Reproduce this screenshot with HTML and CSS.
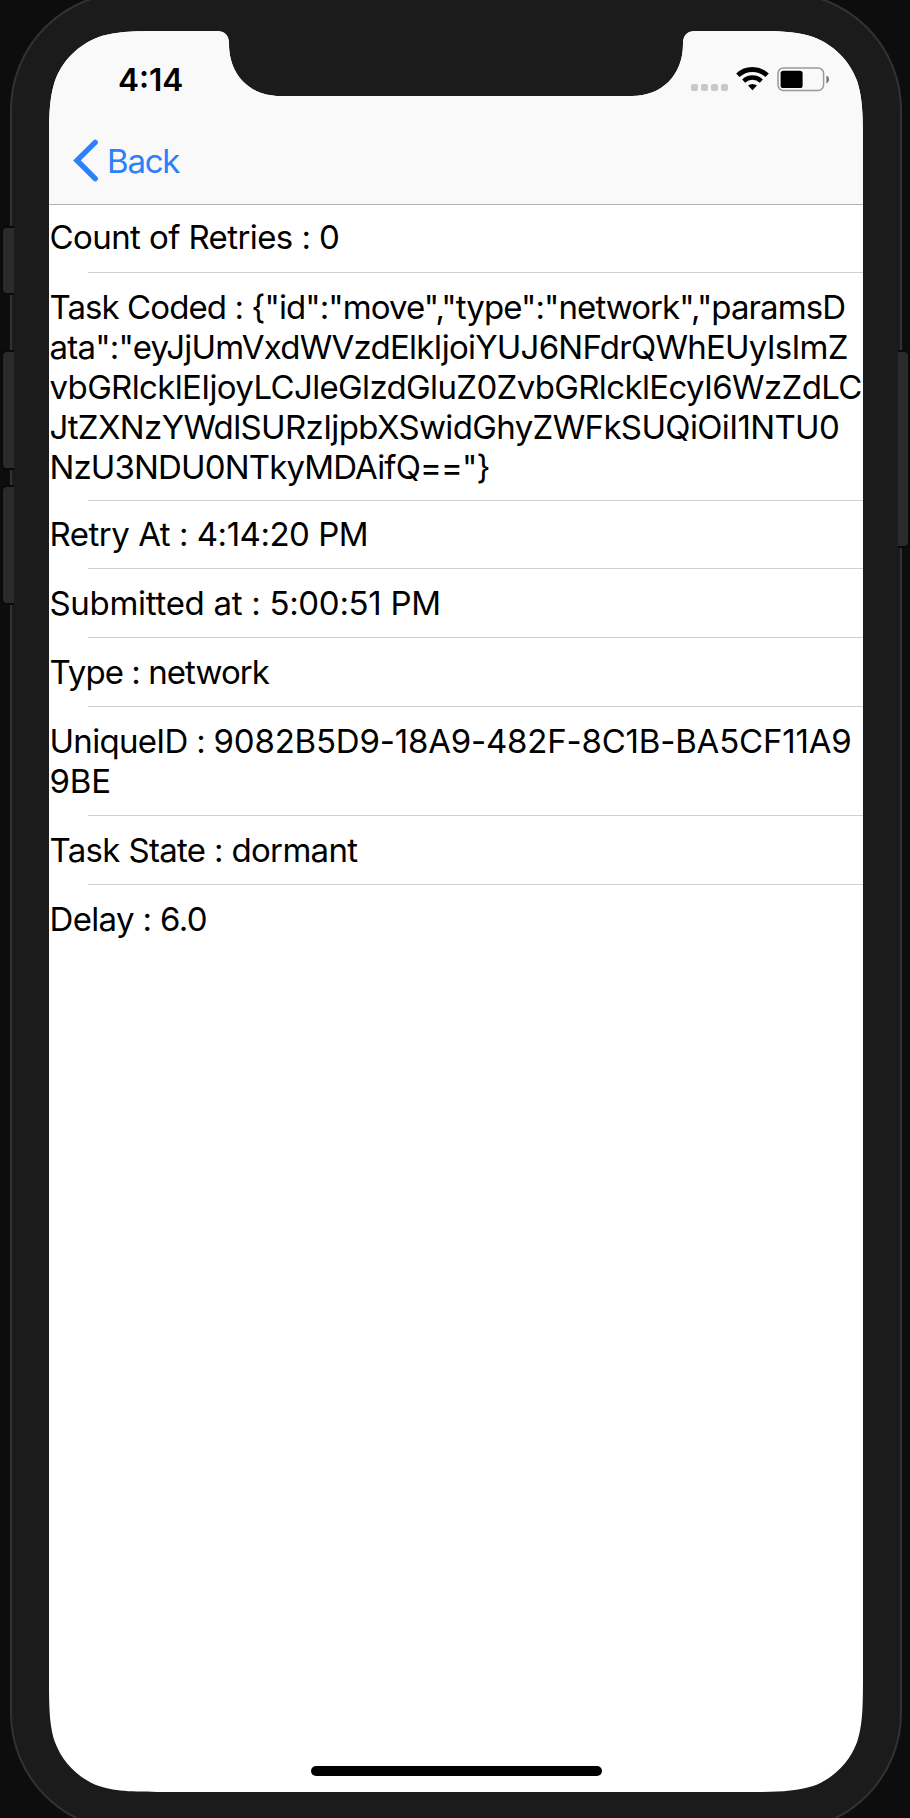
FILE: index.html
```html
<!DOCTYPE html>
<html lang="en">
<head>
<meta charset="utf-8">
<title>Task details</title>
<link rel="stylesheet" href="styles.css">
</head>
<body>
<main class="stage">
  <span class="key key-mute"></span>
  <span class="key key-up"></span>
  <span class="key key-down"></span>
  <span class="key key-power"></span>
  <div class="phone">
    <div class="screen">
      <header class="top">
        <div class="status">
          <span class="time">4:14</span>
          <div class="indicators">
            <span class="signal"><i></i><i></i><i></i><i></i></span>
            <svg class="wifi" width="33" height="24" viewBox="0 0 34 24"><path d="M1.9 8.2a22 22 0 0 1 30.2 0" fill="none" stroke="#000" stroke-width="5"/><path d="M7.9 14.1a13.4 13.4 0 0 1 18.2 0" fill="none" stroke="#000" stroke-width="4.6"/><path d="M12.4 18.8a7 7 0 0 1 9.2 0L17 23.5z"/></svg>
            <svg class="battery" width="53" height="25" viewBox="0 0 53 25"><rect x="1" y="1" width="45.6" height="22.6" rx="5.5" fill="none" stroke="#999" stroke-width="1.5"/><rect x="3.6" y="3.7" width="22" height="17.3" rx="2.6"/><path d="M49.4 8.6c3.6 1.2 3.6 6.6 0 7.8z" fill="#777"/></svg>
          </div>
        </div>
        <nav class="nav">
          <svg class="chevron" width="26" height="43" viewBox="0 0 26 43"><path d="M22.2 3.3L4 21.4l18.2 18.2" fill="none" stroke="#2c80fa" stroke-width="5.4" stroke-linecap="round"/></svg>
          <span class="back">Back</span>
        </nav>
      </header>
      <ul class="rows">
        <li class="row"><span class="line retries">Count of Retries : 0</span></li>
        <li class="row"><span class="line coded-1">Task Coded : {"id":"move","type":"network","paramsD</span><span class="line coded-2">ata":"eyJjUmVxdWVzdElkIjoiYUJ6NFdrQWhEUyIsImZ</span><span class="line coded-3">vbGRlcklEIjoyLCJleGlzdGluZ0ZvbGRlcklEcyI6WzZdLC</span><span class="line coded-4">JtZXNzYWdlSURzIjpbXSwidGhyZWFkSUQiOiI1NTU0</span><span class="line coded-5">NzU3NDU0NTkyMDAifQ=="}</span></li>
        <li class="row raised"><span class="line retry-at">Retry At : 4:14:20 PM</span></li>
        <li class="row raised"><span class="line submitted">Submitted at : 5:00:51 PM</span></li>
        <li class="row"><span class="line type">Type : network</span></li>
        <li class="row"><span class="line uid"><span class="uid-label">UniqueID : </span>9082B5D9-18A9-482F-8C1B-BA5CF11A9</span><span class="line uid">9BE</span></li>
        <li class="row"><span class="line state">Task State : dormant</span></li>
        <li class="row"><span class="line delay">Delay : 6.0</span></li>
      </ul>
      <span class="home"></span>
    </div>
  </div>
</main>
</body>
</html>
```
FILE: styles.css
```css
* { box-sizing: border-box; }
body { margin: 0; background: #0d0d0e; font-family: Inter, "Liberation Sans", sans-serif; color: #000; }
.stage { position: relative; width: 910px; height: 1818px; overflow: hidden; display: flex; }
.phone { flex: none; width: 892px; height: 1839px; margin: -8px 0 0 10px; padding: 37px 36px 37px 37px; border: 2px solid #323232; border-radius: 118px; background: #1b1b1b; }
.screen {
  width: 815px; height: 1761px; background: #fff; display: flex; flex-direction: column;
  clip-path: path("M120.8 0H167C176 0 180 4 180 13C180 44 201 65 231 65H583C613 65 634 44 634 13C634 4 638 0 647 0H693.2C728 0 745.4 0 764.1 5.9C784.5 13.4 800.6 29.5 808.1 49.9C814 68.6 814 86 814 120.8V1640.2C814 1675 814 1692.4 808.1 1711.1C800.6 1731.5 784.5 1747.6 764.1 1755.1C745.4 1761 728 1761 693.2 1761H120.8C86 1761 68.6 1761 49.9 1755.1C29.5 1747.6 13.4 1731.5 5.9 1711.1C0 1692.4 0 1675 0 1640.2V120.8C0 86 0 68.6 5.9 49.9C13.4 29.5 29.5 13.4 49.9 5.9C68.6 0 86 0 120.8 0Z");
}
.top { height: 174px; background: #f9f9f9; border-bottom: 1px solid #b2b2b2; display: flex; flex-direction: column; flex: none; }
.status { height: 86px; display: flex; justify-content: space-between; padding: 36px 34px 0 69px; }
.time { font-size: 31.5px; font-weight: 600; line-height: 25px; }
.indicators { display: flex; align-items: flex-start; }
.signal { display: flex; gap: 3px; margin: 17px 8px 0 0; }
.signal i { width: 7px; height: 7px; border-radius: 2px; background: #c8c8c8; }
.wifi { margin-right: 8px; }
.nav { height: 87px; display: flex; align-items: center; padding-left: 24px; color: #2c80fa; }
.back { font-size: 33px; line-height: 40px; margin-left: 8px; letter-spacing: -1.2px; }
.rows { list-style: none; margin: 0; padding: 0; flex: none; }
.row { padding: 14.2px 0 14.6px 0.5px; font-size: 33px; line-height: 40px; background: linear-gradient(#d0d0d2, #d0d0d2) 39px 100% / 100% 1px no-repeat; }
.row:first-child { padding-top: 12.4px; padding-bottom: 15.6px; }
.row:nth-child(2) { padding-bottom: 13.4px; }
.raised { padding-top: 13.5px; padding-bottom: 15.3px; }
.row:last-child { background: none; }
.line { display: block; white-space: nowrap; }
.retries { letter-spacing: -0.59px; }
.coded-1 { letter-spacing: -0.925px; }
.coded-2 { letter-spacing: -0.765px; }
.coded-3 { letter-spacing: -0.643px; }
.coded-4 { letter-spacing: -0.64px; }
.coded-5 { letter-spacing: -0.857px; }
.retry-at { letter-spacing: -0.48px; }
.submitted { letter-spacing: -0.3px; }
.type { letter-spacing: -0.94px; }
.uid { letter-spacing: -0.2px; }
.uid-label { letter-spacing: -0.7px; }
.state { letter-spacing: -0.67px; }
.delay { letter-spacing: -0.653px; }
.home { width: 291px; height: 10px; border-radius: 5px; background: #000; margin: auto auto 16px 261.5px; flex: none; }
.key { position: absolute; background: #2b2b2b; z-index: 1; box-shadow: 0 0 0 2px #0a0a0a; clip-path: inset(-2px 0 -2px -2px); }
.key-mute, .key-up, .key-down { left: 3px; width: 11px; border-radius: 4px 0 0 4px; }
.key-mute { top: 228px; height: 65px; }
.key-up { top: 352px; height: 116px; }
.key-down { top: 487px; height: 116px; }
.key-power { left: 898px; width: 10px; top: 352px; height: 194px; border-radius: 0 4px 4px 0; clip-path: inset(-2px -2px -2px 0); }
```
